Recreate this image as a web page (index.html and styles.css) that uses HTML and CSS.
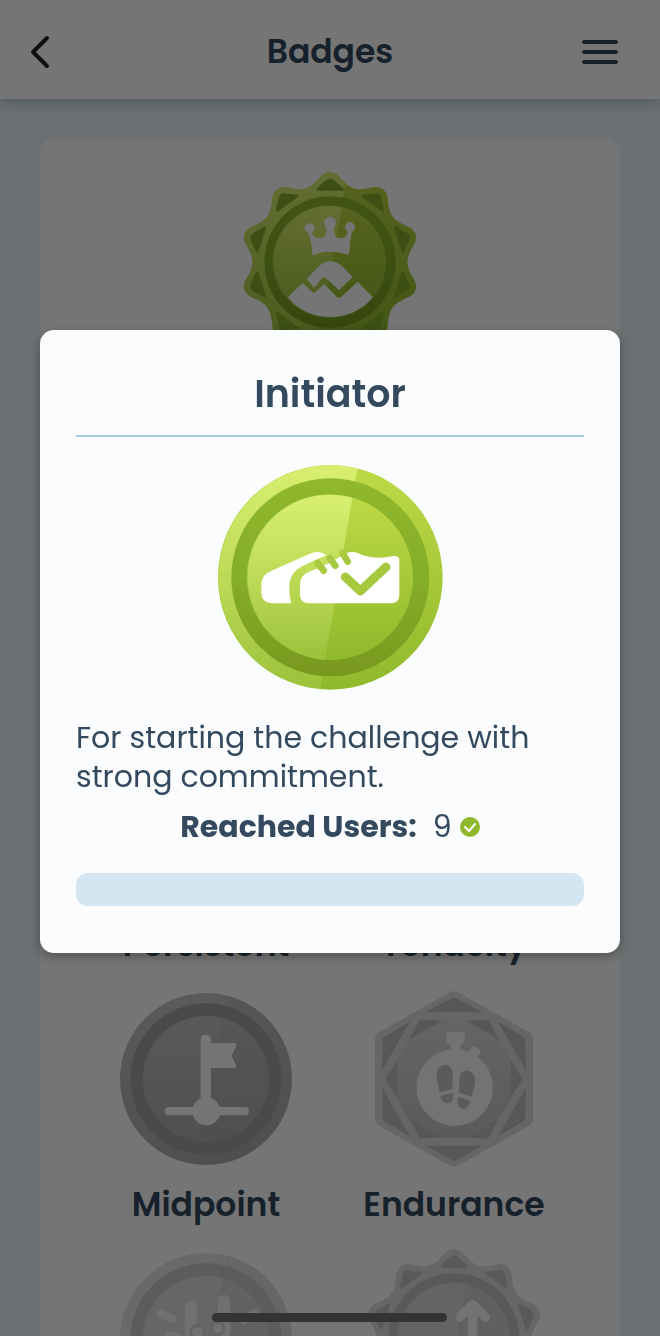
FILE: index.html
```html
<!DOCTYPE html>
<html lang="en">
<head>
    <meta charset="UTF-8">
    <meta name="viewport" content="width=device-width, initial-scale=1.0">
    <title>Badges</title>
    <link rel="stylesheet" href="styles.css">
</head>
<body>
    <!-- Shared shapes and gradients -->
    <svg class="defs" width="0" height="0" aria-hidden="true">
        <defs>
            <linearGradient id="green" x1="0" y1="0" x2="0" y2="1">
                <stop offset="0" stop-color="#bfd946"/>
                <stop offset="1" stop-color="#8fb92c"/>
            </linearGradient>
            <linearGradient id="green-ring" x1="0" y1="0" x2="0" y2="1">
                <stop offset="0" stop-color="#8fb82b"/>
                <stop offset="0.5" stop-color="#85ae29"/>
                <stop offset="1" stop-color="#78981e"/>
            </linearGradient>
            <linearGradient id="grey" x1="0" y1="0" x2="0" y2="1">
                <stop offset="0" stop-color="#bcbcbc"/>
                <stop offset="1" stop-color="#acacac"/>
            </linearGradient>
            <linearGradient id="hex" x1="0" y1="0" x2="0" y2="1">
                <stop offset="0" stop-color="#dadada"/>
                <stop offset="1" stop-color="#c6c6c6"/>
            </linearGradient>
            <linearGradient id="gloss" x1="0" y1="0" x2="0" y2="1">
                <stop offset="0" stop-color="#fff" stop-opacity="0.36"/>
                <stop offset="1" stop-color="#fff" stop-opacity="0.04"/>
            </linearGradient>
            <linearGradient id="green-gloss" x1="0" y1="0" x2="0" y2="1">
                <stop offset="0" stop-color="#e9fd8c" stop-opacity="0.6"/>
                <stop offset="1" stop-color="#d8ee80" stop-opacity="0.16"/>
            </linearGradient>
            <path id="petal" d="M0 0L-74-220C-46-230-36-250-22-262Q0-278 22-262C36-250 46-230 74-220Z"/>
            <clipPath id="star">
                <use href="#petal"/>
                <use href="#petal" transform="rotate(36)"/>
                <use href="#petal" transform="rotate(72)"/>
                <use href="#petal" transform="rotate(108)"/>
                <use href="#petal" transform="rotate(144)"/>
                <use href="#petal" transform="rotate(180)"/>
                <use href="#petal" transform="rotate(216)"/>
                <use href="#petal" transform="rotate(252)"/>
                <use href="#petal" transform="rotate(288)"/>
                <use href="#petal" transform="rotate(324)"/>
            </clipPath>
            <path id="tip" stroke-width="8" stroke-linejoin="round" d="M-9-243Q0-250 9-243L37-218H-37Z"/>
            <g id="tips">
                <use href="#tip"/>
                <use href="#tip" transform="rotate(36)"/>
                <use href="#tip" transform="rotate(72)"/>
                <use href="#tip" transform="rotate(108)"/>
                <use href="#tip" transform="rotate(144)"/>
                <use href="#tip" transform="rotate(180)"/>
                <use href="#tip" transform="rotate(216)"/>
                <use href="#tip" transform="rotate(252)"/>
                <use href="#tip" transform="rotate(288)"/>
                <use href="#tip" transform="rotate(324)"/>
            </g>
            <g id="facet">
                <path d="M-8-242Q0-249 8-242L85-200H-85Z"/>
                <path d="M168-60L206 0L168 60Z"/>
            </g>
        </defs>
    </svg>

    <header class="header">
        <button class="icon-button back" type="button" aria-label="Back">
            <svg width="20" height="34" viewBox="0 0 20 34"><path class="back-line" d="M17 3L3 17L17 31"/></svg>
        </button>
        <h1>Badges</h1>
        <button class="icon-button" type="button" aria-label="Menu">
            <svg width="36" height="26" viewBox="0 0 36 26"><path class="menu-line" d="M2 3H34M2 13H34M2 23H34"/></svg>
        </button>
    </header>

    <main class="card">
        <div class="featured">
            <svg class="badge" viewBox="28 37 540 540" aria-hidden="true">
                <g transform="translate(298 307)">
                    <g clip-path="url(#star)">
                        <rect x="-270" y="-270" width="540" height="540" fill="url(#green)"/>
                        <path fill="url(#green-gloss)" d="M53-270H-270V270H-53Z"/>
                    </g>
                    <use href="#tips" fill="#86ac2b" stroke="#86ac2b"/>
                    <circle r="197" fill="url(#green-ring)"/>
                    <circle r="168" fill="url(#green)"/>
                    <path fill="url(#green-gloss)" d="M36-164A168 168 0 1 0-23 166Z"/>
                </g>
                <g fill="#fff">
                    <circle cx="237" cy="206" r="15"/>
                    <circle cx="298" cy="189" r="18"/>
                    <circle cx="358" cy="203" r="15"/>
                    <path d="M245 284Q243 245 232 215L243 215Q246 235 262 235H275Q287 232 287 200H309Q311 232 320 235H335Q350 232 351 213L364 213Q357 245 356 278Q354 287 346 284Q298 266 252 285Q246 288 245 284Z"/>
                    <path d="M228 357L265 320Q298 290 335 320L366 352L325 392L287 356Q280 350 274 356L250 384Z"/>
                    <path d="M171 413L216 370L242 395Q250 402 257 395L281 374L318 411Q325 417 332 411L381 366L427 413A168 168 0 0 1 171 413Z"/>
                </g>
            </svg>
        </div>

        <div class="badges">
            <figure>
                <svg class="badge" viewBox="45 147 540 540" aria-hidden="true">
                    <circle cx="315" cy="417" r="258" fill="url(#grey)"/>
                </svg>
                <figcaption>Persistent</figcaption>
            </figure>
            <figure>
                <svg class="badge" viewBox="45 147 540 540" aria-hidden="true">
                    <circle cx="315" cy="417" r="258" fill="url(#grey)"/>
                </svg>
                <figcaption>Tenacity</figcaption>
            </figure>
            <figure>
                <svg class="badge" viewBox="45 147 540 540" aria-hidden="true">
                    <circle cx="315" cy="417" r="258" fill="url(#grey)"/>
                    <path fill="url(#gloss)" opacity="0.4" d="M378 167A258 258 0 1 0 283 673Z"/>
                    <circle cx="315" cy="417" r="227" fill="#a1a1a1"/>
                    <circle cx="315" cy="417" r="189" fill="url(#grey)"/>
                    <path fill="url(#gloss)" opacity="0.3" d="M366 235A189 189 0 1 0 290 604Z"/>
                    <g fill="#fff">
                        <rect x="299" y="284" width="31" height="210" rx="14"/>
                        <path d="M328 309H401Q408 311 405 319L392 347L405 375Q407 384 400 384H328Z"/>
                        <rect x="191" y="501" width="253" height="25" rx="12"/>
                        <circle cx="316" cy="514" r="42"/>
                    </g>
                </svg>
                <figcaption>Midpoint</figcaption>
            </figure>
            <figure>
                <svg class="badge" viewBox="40 147 540 540" aria-hidden="true">
                    <path fill="#dedede" stroke="#dedede" stroke-width="60" stroke-linejoin="round" d="M310 184L517 301V533L310 650L103 533V301Z"/>
                    <g transform="translate(310 417)">
                        <g fill="#bdbdbd">
                            <use href="#facet"/>
                            <use href="#facet" transform="rotate(60)"/>
                            <use href="#facet" transform="rotate(120)"/>
                            <use href="#facet" transform="rotate(180)"/>
                            <use href="#facet" transform="rotate(240)"/>
                            <use href="#facet" transform="rotate(300)"/>
                        </g>
                        <path fill="url(#hex)" d="M-33-177H33L137-117L170-60V60L137 117L33 177H-33L-137 117L-170 60V-60L-137-117Z"/>
                    </g>
                    <g fill="#fafafa">
                        <circle cx="312" cy="443" r="115"/>
                        <rect x="288" y="276" width="54" height="35" rx="9"/>
                        <path d="M300 300H330V340H300Z"/>
                        <rect x="355" y="320" width="30" height="36" rx="8" transform="rotate(38 370 338)"/>
                    </g>
                    <g fill="#c6c6c6">
                        <path d="M283 375C302 375 309 393 306 415Q303 433 307 446L267 457Q266 445 260 425C254 395 262 375 283 375Z"/>
                        <path d="M269 468L307 458C310 478 303 489 291 489C278 489 271 481 269 468Z"/>
                        <path d="M349 392C368 392 377 412 372 435Q366 455 364 470L324 458Q328 443 326 423C324 405 332 392 349 392Z"/>
                        <path d="M323 470L358 482C355 499 348 507 337 507C324 506 318 492 323 470Z"/>
                    </g>
                </svg>
                <figcaption>Endurance</figcaption>
            </figure>
            <figure>
                <svg class="badge" viewBox="45 207 540 540" aria-hidden="true">
                    <circle cx="315" cy="477" r="258" fill="#dedede"/>
                    <path fill="#fff" opacity="0.2" d="M378 227A258 258 0 1 0 283 733Z"/>
                    <circle cx="315" cy="477" r="227" fill="#c8c8c8"/>
                    <circle cx="315" cy="477" r="189" fill="#d6d6d6"/>
                    <path fill="#fff" opacity="0.2" d="M366 295A189 189 0 1 0 290 664Z"/>
                    <g class="claps">
                        <path stroke-width="25" d="M180 401L216 418M205 466L230 474M430 420L462 400"/>
                        <path stroke-width="37" d="M270 381V500M369 363V500"/>
                        <circle cx="290" cy="458" r="21"/>
                        <circle cx="350" cy="445" r="19"/>
                    </g>
                </svg>
            </figure>
            <figure>
                <svg class="badge" viewBox="70 207 540 540" aria-hidden="true">
                    <g transform="translate(340 477)">
                        <rect x="-270" y="-270" width="540" height="540" fill="#dedede" clip-path="url(#star)"/>
                        <use href="#tips" fill="#c2c2c2" stroke="#c2c2c2"/>
                        <circle r="197" fill="#c2c2c2"/>
                        <circle r="168" fill="#d2d2d2"/>
                        <path fill="#fff" opacity="0.2" d="M36-164A168 168 0 1 0-23 166Z"/>
                    </g>
                    <path class="arrow" d="M396 500V374M358 411L396 373L434 411"/>
                </svg>
            </figure>
        </div>
    </main>

    <div class="overlay">
        <div class="modal" role="dialog" aria-modal="true" aria-labelledby="badge-title">
            <h2 id="badge-title">Initiator</h2>
            <svg class="badge-large" viewBox="51 45 675 675" aria-hidden="true">
                <circle cx="388" cy="382" r="337" fill="url(#green)"/>
                <path fill="url(#green-gloss)" d="M469 55A337 337 0 1 0 357 718Z"/>
                <circle cx="388" cy="382" r="297" fill="url(#green-ring)"/>
                <circle cx="388" cy="382" r="248" fill="url(#green)"/>
                <path fill="url(#green-gloss)" d="M454 143A248 248 0 1 0 372 629Z"/>
                <g fill="#fff">
                    <path d="M181 405C181 382 193 370 215 361L325 312Q345 302 362 308L377 316Q340 330 305 348Q265 368 265 410Q265 440 271 460H212Q181 458 181 430Z"/>
                    <path d="M297 405C297 382 310 370 335 361L360 352L444 307Q462 303 477 312Q525 331 578 318Q595 317 595 330V435Q595 460 570 460H322Q297 458 297 435Z"/>
                </g>
                <path class="shoe-line" stroke-width="20" d="M350 340L368 362M386 325L403 347M424 308L440 335"/>
                <path class="shoe-line" stroke-width="27" d="M433 381L478 423L555 351"/>
            </svg>
            <p class="description">For starting the challenge with strong commitment.</p>
            <p class="reached">
                <label for="reached-progress">Reached Users:</label>
                <span>9</span>
                <svg width="20" height="20" viewBox="0 0 20 20" aria-hidden="true">
                    <circle cx="10" cy="10" r="10" fill="#8fb82d"/>
                    <path class="tick" d="M5 10L9 14L15 7"/>
                </svg>
            </p>
            <progress id="reached-progress" value="0" max="100"></progress>
        </div>
    </div>

    <div class="home-bar"></div>
</body>
</html>
```

FILE: styles.css
```css
* {
    box-sizing: border-box;
}
body {
    margin: 0;
    height: 100vh;
    overflow: hidden; /* no scrolling while the modal is open */
    font-family: Poppins, Inter, sans-serif;
    background-color: #e8f3fa;
    color: #34495e;
}
h1, h2, p, figure {
    margin: 0;
}
svg {
    display: block;
}
.defs {
    position: absolute;
}

/* Header */
.header {
    display: flex;
    justify-content: space-between;
    align-items: center;
    height: 99px;
    padding: 4px 42px 0 30px;
    background-color: #fff;
    box-shadow: 0 4px 12px rgba(60, 90, 110, 0.3);
}
.header h1 {
    font-size: 33px;
    line-height: 48px;
    font-weight: 600;
}
.icon-button {
    display: flex;
    align-items: center;
    width: 36px;
    height: 48px;
    padding: 0;
    border: none;
    background: none;
    cursor: pointer;
}
.icon-button.back {
    width: 48px;
}
.back-line, .menu-line, .arrow, .claps path, .shoe-line, .tick {
    fill: none;
    stroke-linecap: round;
    stroke-linejoin: round;
}
.back-line {
    stroke: #222;
    stroke-width: 4;
}
.menu-line {
    stroke: #34495e;
    stroke-width: 4;
}

/* Badge list */
.card {
    margin: 40px 40px 0;
    padding: 33px 42px;
    border-radius: 14px;
    background-color: #fff;
}
.featured {
    min-height: 557px;
}
.badge {
    width: 180px;
    height: 180px;
    margin: 0 auto;
}
.badges {
    display: grid;
    grid-template-columns: 1fr 1fr;
    row-gap: 20px;
}
.badges figcaption {
    margin-top: 12px;
    font-size: 33px;
    line-height: 48px;
    font-weight: 600;
    text-align: center;
}
.arrow {
    stroke: #fafafa;
    stroke-width: 28;
}
.claps path {
    stroke: #f4f4f4;
}
.claps circle {
    fill: #f4f4f4;
    stroke: #d6d6d6;
    stroke-width: 8;
}

/* Modal */
.overlay {
    position: fixed;
    inset: 0;
    display: flex;
    align-items: center;
    padding: 0 40px 53px;
    background-color: rgba(0, 0, 0, 0.54);
}
.modal {
    width: 100%;
    padding: 36px 36px 47px;
    border-radius: 14px;
    background-color: #fafcfe;
    box-shadow: 0 4px 12px rgba(0, 0, 0, 0.3);
}
.modal h2 {
    padding-bottom: 13px;
    border-bottom: 2px solid #a9cce3;
    font-size: 38px;
    line-height: 56px;
    font-weight: 600;
    text-align: center;
}
.badge-large {
    width: 225px;
    height: 225px;
    margin: 28px auto;
}
.shoe-line {
    stroke: #a6c93f;
}
.description {
    font-size: 30px;
    line-height: 39px;
}
.reached {
    display: flex;
    justify-content: center;
    align-items: center;
    gap: 8px;
    margin: 11px 0 26px;
    font-size: 30px;
    line-height: 40px;
}
.reached label {
    margin-right: 8px;
    font-weight: 700;
}
.tick {
    stroke: #fff;
    stroke-width: 2;
}
progress {
    display: block;
    width: 100%;
    height: 33px;
    border: none;
    border-radius: 12px;
    background-color: #d4e6f1;
    overflow: hidden;
    appearance: none;
}
progress::-webkit-progress-bar {
    background-color: #d4e6f1;
}
progress::-webkit-progress-value {
    background-color: #8fb82d;
}

/* Phone home indicator */
.home-bar {
    position: fixed;
    bottom: 14px;
    left: 50%;
    width: 235px;
    height: 9px;
    margin-left: -118px;
    border-radius: 5px;
    background-color: #333;
}
```
